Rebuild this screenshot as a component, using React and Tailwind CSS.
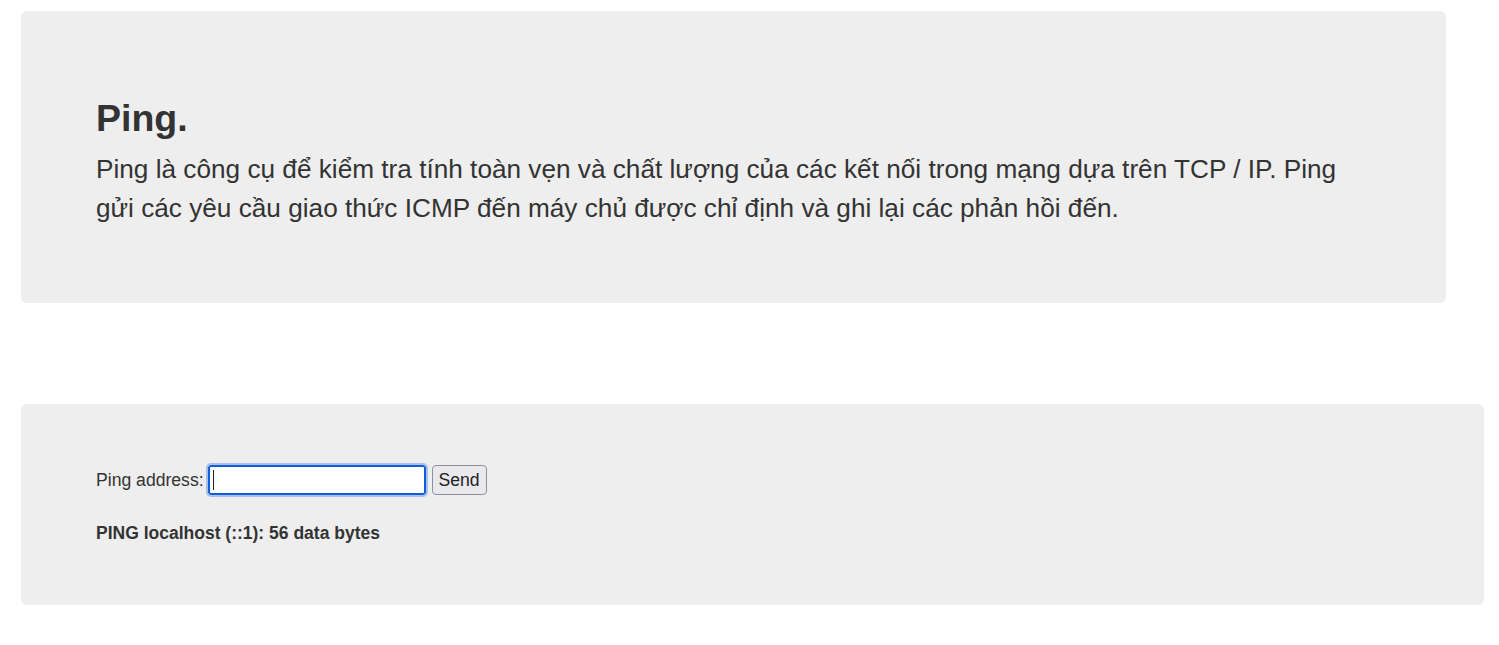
import { useState } from "react"

export default function App() {
  const [address, setAddress] = useState("")

  return (
    <div className="min-h-screen bg-white pt-[11px] pl-[21px] pr-[15px] text-[#333] font-['Liberation_Sans',Arial,sans-serif]">
      <div className="w-[1425px] rounded-[6px] bg-[#eee] pl-[75px] pr-[75px] pt-[87px] pb-[75px]">
        <h1 className="text-[37.5px] leading-[40px] font-bold">Ping.</h1>
        <p className="mt-[12px] text-[26.2px] leading-[39px]">
          Ping là công cụ để kiểm tra tính toàn vẹn và chất lượng của các kết nối trong mạng dựa trên TCP / IP. Ping
          gửi các yêu cầu giao thức ICMP đến máy chủ được chỉ định và ghi lại các phản hồi đến.
        </p>
      </div>

      <div className="mt-[101px] w-[1463px] rounded-[6px] bg-[#eee] pl-[75px] pr-[75px] pt-[59px] pb-[60px]">
        <form className="flex items-center text-[17.6px]" onSubmit={(e) => e.preventDefault()}>
          <label htmlFor="addr" className="mr-[2px]">Ping address:</label>
          <div className="relative">
            <input
              id="addr"
              value={address}
              onChange={(e) => setAddress(e.target.value)}
              className="block w-[222px] h-[34px] rounded-[5px] border-2 border-[#adbfe5] bg-white px-[5px] shadow-[inset_0_0_0_2px_#0b5fd9] outline-none caret-transparent"
            />
            {address === "" && (
              <span className="pointer-events-none absolute left-[7px] top-[7px] h-[20px] w-[1px] bg-[#222]" />
            )}
          </div>
          <button
            type="submit"
            className="ml-[4px] h-[30px] w-[55px] rounded-[4px] border border-[#8f8f9d] bg-[#e9e9ed] text-[17.6px] text-[#222]"
          >
            Send
          </button>
        </form>
        <p className="mt-[24px] text-[17.5px] leading-[24px] font-bold">PING localhost (::1): 56 data bytes</p>
      </div>
    </div>
  )
}
